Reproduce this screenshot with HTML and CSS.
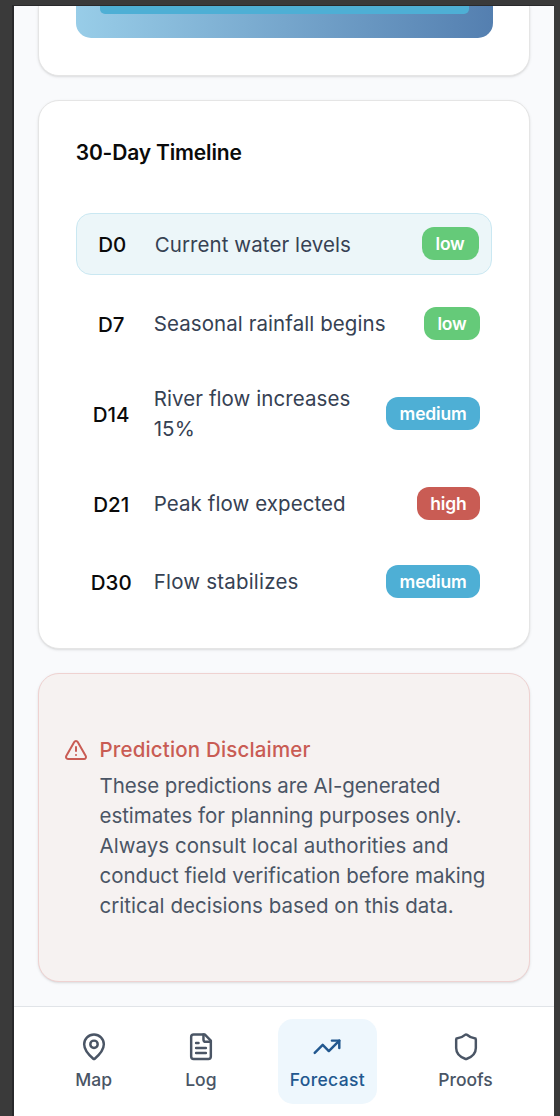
FILE: index.html
```html
<!DOCTYPE html>
<html lang="en">
<head>
<meta charset="utf-8">
<title>Forecast</title>
<link rel="stylesheet" href="styles.css">
</head>
<body>
<div class="screen">
  <main class="content">
    <section class="card chart-card"><div class="chart"><div class="chart-bar"></div></div></section>
    <section class="card timeline">
      <h2 class="title">30-Day Timeline</h2>
      <div class="rows">
        <div class="row current"><span class="day">D0</span><span class="event">Current water levels</span><span class="badge low">low</span></div>
        <div class="row"><span class="day">D7</span><span class="event">Seasonal rainfall begins</span><span class="badge low">low</span></div>
        <div class="row tall"><span class="day">D14</span><span class="event">River flow increases 15%</span><span class="badge medium">medium</span></div>
        <div class="row"><span class="day">D21</span><span class="event">Peak flow expected</span><span class="badge high">high</span></div>
        <div class="row"><span class="day">D30</span><span class="event e4">Flow stabilizes</span><span class="badge medium">medium</span></div>
      </div>
    </section>
    <section class="card disclaimer">
      <svg class="warn" viewBox="0 0 24 24"><path d="m21.73 18-8-14a2 2 0 0 0-3.48 0l-8 14A2 2 0 0 0 4 21h16a2 2 0 0 0 1.73-3"/><path d="M12 9v4"/><path d="M12 17h.01"/></svg>
      <div class="copy">
        <h3 class="warn-title">Prediction Disclaimer</h3>
        <p class="warn-text"><span class="l1">These predictions are AI-generated</span><br><span class="l2">estimates for planning purposes only.</span><br><span class="l3">Always consult local authorities and</span><br><span class="l4">conduct field verification before making</span><br><span class="l5">critical decisions based on this data.</span></p>
      </div>
    </section>
  </main>
  <nav class="nav">
    <a class="tab"><svg class="icon" viewBox="0 0 24 24"><path d="M20 10c0 4.993-5.539 10.193-7.399 11.799a1 1 0 0 1-1.202 0C9.539 20.193 4 14.993 4 10a8 8 0 0 1 16 0"/><circle cx="12" cy="10" r="3"/></svg><span>Map</span></a>
    <a class="tab"><svg class="icon" viewBox="0 0 24 24"><path d="M15 2H6a2 2 0 0 0-2 2v16a2 2 0 0 0 2 2h12a2 2 0 0 0 2-2V7Z"/><path d="M14 2v4a2 2 0 0 0 2 2h4"/><path d="M10 9H8"/><path d="M16 13H8"/><path d="M16 17H8"/></svg><span>Log</span></a>
    <a class="tab active"><svg class="icon" viewBox="0 0 24 24"><path d="M16 7h6v6"/><path d="m22 7-8.5 8.5-5-5L2 17"/></svg><span class="n-forecast">Forecast</span></a>
    <a class="tab"><svg class="icon" viewBox="0 0 24 24"><path d="M20 13c0 5-3.5 7.5-7.66 8.95a1 1 0 0 1-.67-.01C7.5 20.5 4 18 4 13V6a1 1 0 0 1 1-1c2 0 4.500-1.200 6.240-2.720a1.170 1.170 0 0 1 1.520 0C14.510 3.810 17 5 19 5a1 1 0 0 1 1 1z"/></svg><span class="n-proofs">Proofs</span></a>
  </nav>
</div>
</body>
</html>
```
FILE: styles.css
```css
* { box-sizing: border-box; }
body {
  margin: 0;
  height: 1116px;
  overflow: hidden;
  padding: 5px 6px 0 12px;
  background: #3a3a3a;
  font-family: Inter, "Liberation Sans", sans-serif;
}
.screen {
  height: 1111px;
  border-left: 2px solid #29292b;
  border-top: 1px solid #29292b;
  background: #f9fafc;
  display: flex;
  flex-direction: column;
  overflow: hidden;
}
.content { height: 1000px; padding: 0 24px; display: flex; flex-direction: column; gap: 24px; }
.card {
  flex: none;
  width: 492px;
  border: 1.5px solid #e5e5e5;
  border-radius: 21px;
  background: #fff;
  box-shadow: 0 1px 3px rgba(0,0,0,.1), 0 1px 2px -1px rgba(0,0,0,.1);
}
.chart-card { height: 69.5px; margin-bottom: .5px; border-top: 0; border-radius: 0 0 21px 21px; padding: 0 36.5px; }
.chart { height: 32.4px; padding: 0 24px; border-radius: 0 0 15px 15px; background: linear-gradient(90deg, #98cde8, #547fb0); }
.chart-bar { height: 8px; border-radius: 0 0 5px 5px; background: #4eafd5; }
.timeline { height: 548.5px; margin-bottom: .5px; padding: 36px 37px 0 36.7px; }
.title { margin: 0; font-size: 21px; line-height: 32px; font-weight: 600; color: #0a0a0a; letter-spacing: -.16px; }
.rows { margin-top: 43.5px; display: flex; flex-direction: column; gap: 18px; }
.row { height: 60px; padding: 0 12px; display: flex; align-items: center; gap: 18px; border-radius: 15px; }
.row.current { height: 62.5px; border: 1.5px solid #cae8f2; background: #ecf6f9; }
.row.tall { height: 84px; }
.day { flex: none; width: 47px; margin-right: 1px; padding-top: 3px; text-align: center; font-size: 20.5px; font-weight: 500; line-height: 30px; color: #0a0a0a; }
.current .day { padding-top: 2px; }
.event { flex: 1; padding-top: 1px; font-size: 20.5px; line-height: 30px; color: #364153; letter-spacing: .08px; }
.current .event { padding-top: 2.5px; }
.e4 { letter-spacing: .2px; }
.badge { flex: none; height: 33px; padding: 0 13.5px; border-radius: 12px; color: #fff; font-size: 17.5px; font-weight: 600; line-height: 33px; letter-spacing: -.2px; }
.low { background: #65ca79; }
.current .badge { width: 57px; }
.medium { background: #4eafd5; }
.high { background: #c95c54; }
.disclaimer { height: 308.5px; padding: 60px 24px 0 24.5px; display: flex; gap: 12px; border-color: #efd2d1; background: #f6f2f1; }
.warn { flex: none; width: 24px; height: 24px; margin-top: 3.5px; fill: none; stroke: #c95c54; stroke-width: 2; stroke-linecap: round; stroke-linejoin: round; }
.copy { white-space: nowrap; }
.warn-title { margin: 0; font-size: 20.5px; line-height: 31px; font-weight: 500; color: #c95c54; letter-spacing: .16px; }
.warn-text { margin: 6px 0 0; font-size: 20.5px; line-height: 30px; color: #4a5565; }
.l1 { letter-spacing: -.1px; }
.l2 { letter-spacing: -.04px; }
.l3, .l5 { letter-spacing: .04px; }
.nav { height: 110px; border-top: 1px solid #e1e4e8; background: #fff; padding: 12px 0 0; display: flex; justify-content: space-evenly; }
.tab { height: 85px; padding: 12.5px 12px; display: flex; flex-direction: column; align-items: center; gap: 6.5px; border-radius: 15px; color: #4a5565; font-size: 17.5px; line-height: 24px; font-weight: 500; }
.active { background: #eef7fd; color: #22588f; }
.n-forecast { letter-spacing: .35px; }
.icon { width: 30px; height: 30px; fill: none; stroke: currentColor; stroke-width: 2; stroke-linecap: round; stroke-linejoin: round; }
```
